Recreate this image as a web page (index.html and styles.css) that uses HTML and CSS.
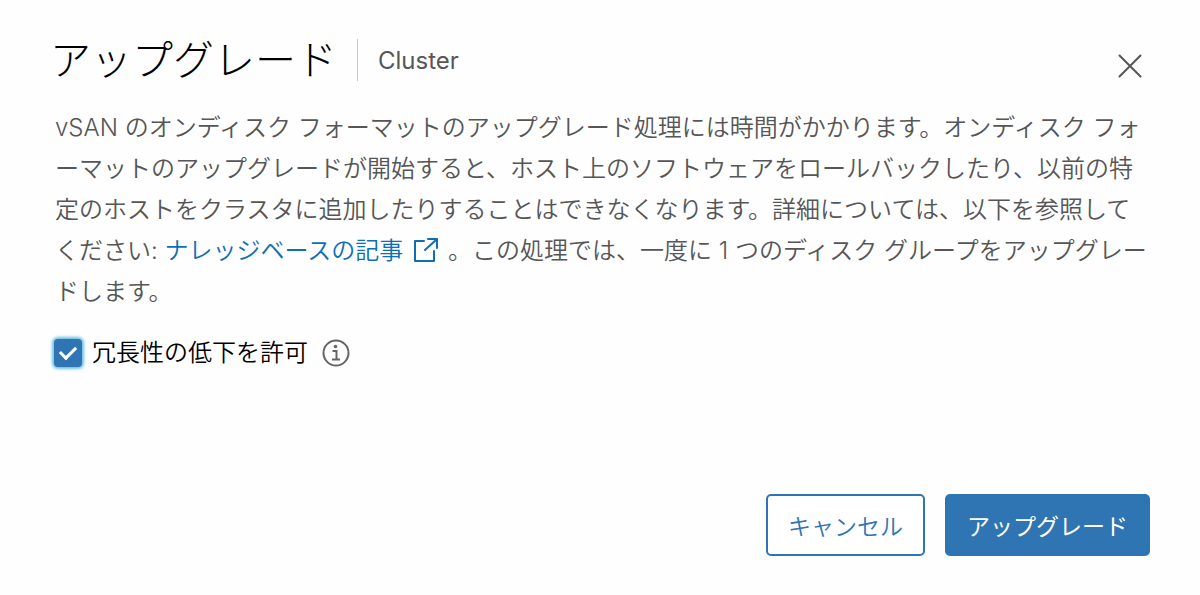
FILE: index.html
```html
<!DOCTYPE html>
<html lang="ja">
<head>
  <meta charset="UTF-8">
  <meta name="viewport" content="width=device-width, initial-scale=1">
  <title>アップグレード</title>
  <link rel="stylesheet" href="styles.css">
</head>
<body>
  <main class="modal" role="dialog" aria-labelledby="modal-title">
    <header class="modal-header">
      <h1 class="modal-title" id="modal-title">アップグレード</h1>
      <span class="modal-subtitle">Cluster</span>
      <button type="button" class="close-button" aria-label="閉じる">
        <svg width="24" height="24" viewBox="0 0 24 24" fill="none" stroke="currentColor" stroke-width="2" stroke-linecap="round">
          <path d="M1.5 1.5L22.5 22.5M22.5 1.5L1.5 22.5"/>
        </svg>
      </button>
    </header>

    <form class="modal-form">
      <p class="description">vSAN のオンディスク フォーマットのアップグレード処理には時間がかかります。オンディスク フォーマットのアップグレードが開始すると、ホスト上のソフトウェアをロールバックしたり、以前の特定のホストをクラスタに追加したりすることはできなくなります。詳細については、以下を参照してください: <a href="#" class="link">ナレッジベースの記事<svg class="link-icon" width="26" height="26" viewBox="0 0 26 26" fill="none" stroke="currentColor" stroke-width="2" stroke-linecap="round" stroke-linejoin="round"><path d="M11 4H2V24H21V14M12 13L24 2M15 2H24V11"/></svg></a> 。この処理では、一度に 1 つのディスク グループをアップグレードします。</p>

      <div class="option">
        <input type="checkbox" class="checkbox" id="reduced" checked>
        <label for="reduced">冗長性の低下を許可</label>
        <button type="button" class="info-button" aria-label="詳細情報">
          <svg width="28" height="28" viewBox="0 0 28 28" fill="none" stroke="currentColor" stroke-width="2">
            <circle cx="14" cy="14" r="12.5"/>
            <path d="M10.5 12H14.5V20M10 20.5H18"/>
            <circle cx="13.5" cy="7.5" r="1.8" fill="currentColor" stroke="none"/>
          </svg>
        </button>
      </div>

      <footer class="modal-footer">
        <button type="button" class="btn btn-outline">キャンセル</button>
        <button type="submit" class="btn btn-primary">アップグレード</button>
      </footer>
    </form>
  </main>
</body>
</html>
```
FILE: styles.css
```css
* {
  box-sizing: border-box;
}

body {
  margin: 0;
  background-color: #fefefe;
  color: #565656;
  font-family: Inter, "Noto Sans CJK JP", sans-serif;
  font-size: 24px;
  font-weight: 350;
}

button {
  font: inherit;
  cursor: pointer;
}

.modal {
  display: flex;
  flex-direction: column;
  min-height: 100vh;
  padding: 32px 50px 39px;
}

.modal-header {
  display: flex;
  align-items: center;
}

.modal-title {
  margin: 0;
  color: #000;
  font-size: 41px;
  font-weight: 300;
  line-height: 56px;
}

.modal-subtitle {
  margin-left: 20px;
  padding-top: 2px;
  padding-left: 20px;
  border-left: 1px solid #ccc;
  font-weight: 400;
  line-height: 40px;
}

.close-button {
  display: flex;
  margin-left: auto;
  margin-top: 12px;
  padding: 8px;
  border: none;
  background: none;
  color: #565656;
}

.modal-form {
  display: flex;
  flex: 1;
  flex-direction: column;
}

.description {
  margin: 19px 0 0;
  padding: 0 0 0 5px;
  line-height: 41px;
}

.link {
  color: #0f6fb5;
  text-decoration: none;
}

.link-icon {
  margin: 0 2px 0 10px;
  vertical-align: -4px;
}

.option {
  display: flex;
  align-items: center;
  margin-top: 20px;
  padding-left: 4px;
  color: #000;
  line-height: 41px;
}

.checkbox {
  display: grid;
  place-items: center;
  width: 28px;
  height: 28px;
  margin: 0 10px 0 0;
  border-radius: 4px;
  background-color: #2f74b3;
  box-shadow: 0 0 3px 2px #6bc1e3;
  appearance: none;
}

.checkbox:checked::before {
  content: "";
  width: 13px;
  height: 7px;
  margin-bottom: 4px;
  border: solid #fff;
  border-width: 0 0 3px 3px;
  transform: rotate(-45deg);
}

.info-button {
  display: flex;
  margin-left: 14px;
  padding: 0;
  border: none;
  background: none;
  color: #666;
}

.modal-footer {
  display: flex;
  justify-content: flex-end;
  gap: 20px;
  margin-top: auto;
}

.btn {
  height: 62px;
  padding: 0 20px;
  border: 2px solid #2f74b3;
  border-radius: 5px;
  font-size: 23px;
}

.btn-outline {
  background-color: #fff;
  color: #2f74b3;
}

.btn-primary {
  background-color: #2f74b3;
  color: #fff;
  font-weight: 400;
}
```
